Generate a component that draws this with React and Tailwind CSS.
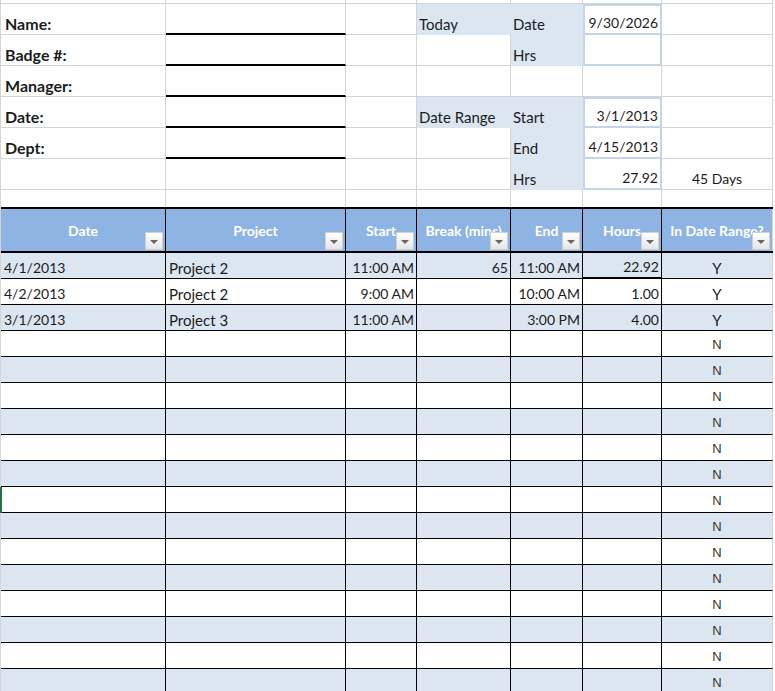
import React from 'react';
import clsx from 'clsx';

// column widths taken from the sheet gridlines
const COLS = 'grid grid-cols-[165px_180px_71px_94px_72px_79px_111px]';

const topRows = [
  { label: 'Name:', c4: 'Today', c5: 'Date', c6: '9/30/2026', fill4: true, fill5: true, box: 'first' },
  { label: 'Badge #:', c5: 'Hrs', fill5: true, box: 'rest' },
  { label: 'Manager:' },
  { label: 'Date:', c4: 'Date Range', c5: 'Start', c6: '3/1/2013', fill4: true, fill5: true, box: 'first' },
  { label: 'Dept:', c5: 'End', c6: '4/15/2013', fill5: true, box: 'rest' },
  { label: '', c5: 'Hrs', c6: '27.92', c7: '45 Days', fill5: true, box: 'rest' },
];

const headers = ['Date', 'Project', 'Start', 'Break (mins)', 'End', 'Hours', 'In Date Range?'];
const align = ['justify-start pl-[3px]', 'justify-start pl-[3px]', 'justify-end pr-[2px]', 'justify-end pr-[2px]', 'justify-end pr-[2px]', 'justify-end pr-[2px]', 'justify-center'];

const entries = [
  ['4/1/2013', 'Project 2', '11:00 AM', '65', '11:00 AM', '22.92', 'Y'],
  ['4/2/2013', 'Project 2', '9:00 AM', '', '10:00 AM', '1.00', 'Y'],
  ['3/1/2013', 'Project 3', '11:00 AM', '', '3:00 PM', '4.00', 'Y'],
];
while (entries.length < 17) entries.push(['', '', '', '', '', '', 'N']);

function FilterButton() {
  return (
    <span className="absolute right-[2px] bottom-[1px] w-[18px] h-[18px] bg-gradient-to-b from-white to-[#e6e6e6] border border-[#cfcfcf] flex items-center justify-center pt-[2px]">
      <span className="w-0 h-0 border-l-[4px] border-r-[4px] border-t-[4px] border-l-transparent border-r-transparent border-t-[#666]" />
    </span>
  );
}

function TopCell({ className, children }) {
  return <div className={clsx('h-[31px] flex items-end leading-[20px] border-r border-b', className)}>{children}</div>;
}

export default function App() {
  return (
    <div className="w-[775px] h-[691px] overflow-hidden bg-white text-[#1c1c1c] font-['Lato',sans-serif] text-[14px]">
      <div className="w-[773px] border-l border-[#d4d4d4]">
        {/* strip above the first visible row */}
        <div className={COLS}>
          {Array.from({ length: 7 }).map((_, i) => (
            <div key={i} className="h-[4px] border-r border-b border-[#d4d4d4]" />
          ))}
        </div>

        {/* employee info + summary block */}
        {topRows.map((r, i) => (
          <div key={i} className={COLS}>
            <TopCell className="border-[#d4d4d4] pl-[4px] font-bold text-[16px]">{r.label}</TopCell>
            <TopCell className={clsx('border-r-[#d4d4d4]', i < 5 ? 'border-b-2 border-b-black' : 'border-b-[#d4d4d4]')} />
            <TopCell className="border-[#d4d4d4]" />
            <TopCell className={clsx('pl-[2px] text-[15px]', r.fill4 ? 'bg-[#dce6f1] border-[#dce6f1]' : 'border-[#d4d4d4]')}>{r.c4}</TopCell>
            <TopCell className={clsx('pl-[2px] text-[15px]', r.fill5 ? 'bg-[#dce6f1] border-[#dce6f1]' : 'border-[#d4d4d4]')}>{r.c5}</TopCell>
            <TopCell
              className={clsx(
                'justify-end pr-[2px]',
                r.box ? 'border-r-2 border-b-2 border-[#c5d4e7]' : 'border-[#d4d4d4]',
                r.box === 'first' && 'shadow-[inset_2px_2px_0_#c5d4e7]',
                r.box === 'rest' && 'shadow-[inset_2px_0_0_#c5d4e7]'
              )}
            >
              {r.c6}
            </TopCell>
            <TopCell className="border-[#d4d4d4] justify-center">{r.c7}</TopCell>
          </div>
        ))}

        {/* spacer row */}
        <div className={COLS}>
          {Array.from({ length: 7 }).map((_, i) => (
            <div key={i} className="h-[17px] border-r border-[#d4d4d4]" />
          ))}
        </div>

        {/* table header */}
        <div className={clsx(COLS, 'border-t-2 border-b-2 border-black')}>
          {headers.map((h, i) => (
            <div
              key={h}
              className={clsx(
                'relative h-[42px] bg-[#8db4e2] flex items-center justify-center overflow-hidden whitespace-nowrap text-white font-bold border-r',
                i === 6 ? 'border-[#d4d4d4]' : 'border-black'
              )}
            >
              {h}
              <FilterButton />
            </div>
          ))}
        </div>

        {/* table rows */}
        {entries.map((row, ri) => (
          <div key={ri} className={clsx(COLS, 'relative', ri % 2 === 0 ? 'bg-[#dce6f1]' : 'bg-white')}>
            {ri === 9 && <span className="absolute -left-[1px] top-0 bottom-0 w-[2px] bg-[#217346]" />}
            {row.map((v, ci) => (
              <div
                key={ci}
                className={clsx(
                  'h-[26px] flex items-end leading-[20px] whitespace-nowrap border-r border-b border-b-black',
                  ci === 6 ? 'border-r-[#d4d4d4]' : 'border-r-black',
                  ri === 0 && ci === 5 && 'border-b-2',
                  (ci === 1 || v === 'Y') && 'text-[15px]',
                  align[ci],
                  v === 'N' && "font-['Liberation_Sans',sans-serif] text-[13px] text-[#333] pb-[1px]"
                )}
              >
                {v}
              </div>
            ))}
          </div>
        ))}
      </div>
    </div>
  );
}
